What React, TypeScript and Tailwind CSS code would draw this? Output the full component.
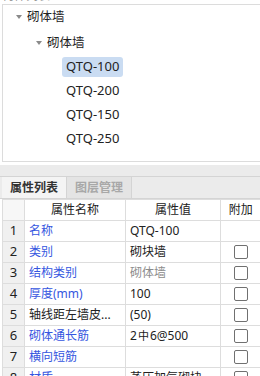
import React from "react";

const font = '"Segoe UI", "Noto Sans", "Noto Sans CJK SC", sans-serif';

type Row = { n: number; name: string; value: string; blue: boolean; grayValue?: boolean; check: boolean };

const rows: Row[] = [
  { n: 1, name: "名称", value: "QTQ-100", blue: true, check: false },
  { n: 2, name: "类别", value: "砌块墙", blue: true, check: true },
  { n: 3, name: "结构类别", value: "砌体墙", blue: true, grayValue: true, check: true },
  { n: 4, name: "厚度(mm)", value: "100", blue: true, check: true },
  { n: 5, name: "轴线距左墙皮...", value: "(50)", blue: false, check: true },
  { n: 6, name: "砌体通长筋", value: "2中6@500", blue: true, check: true },
  { n: 7, name: "横向短筋", value: "", blue: true, check: true },
  { n: 8, name: "材质", value: "蒸压加气砌块", blue: true, check: true },
];

function Caret() {
  return <span className="inline-block w-0 h-0 border-l-[3px] border-r-[3px] border-t-[4px] border-l-transparent border-r-transparent border-t-[#8a8a8a]" />;
}

export default function App() {
  return (
    <div className="w-[260px] h-[376px] overflow-hidden bg-white text-[12px] text-[#222]" style={{ fontFamily: font }}>
      {/* cut-off header label */}
      <div className="h-[4px] overflow-hidden pl-[2px]">
        <div className="-mt-[13px] text-[12px] text-[#999]">构件列表</div>
      </div>

      {/* Tree panel */}
      <div className="ml-[2px] h-[158px] border-t border-l border-b border-[#dcdcdc]">
        <div className="h-[24px] flex items-center pl-[13px] gap-[5px] text-[12.5px]">
          <Caret />
          <span>砌体墙</span>
        </div>
        <div className="h-[24px] mt-[2px] flex items-center pl-[33px] gap-[5px] text-[12.5px]">
          <Caret />
          <span>砌体墙</span>
        </div>
        {["QTQ-100", "QTQ-200", "QTQ-150", "QTQ-250"].map((t, i) => (
          <div key={t} className="h-[24px] flex items-center pl-[59px] text-[13px]">
            <span className={`h-[20px] flex items-center px-[4px] rounded-[3px] ${i === 0 ? "bg-[#cadcf2]" : ""}`}>{t}</span>
          </div>
        ))}
      </div>

      {/* Tab strip */}
      <div className="mt-[3px] h-[12px] bg-[#ebebeb] border-b border-[#d4d4d4]" />
      <div className="flex h-[22px] bg-[#ebebeb] pl-[2px] border-b border-[#d4d4d4]">
        <div className="w-[65px] flex items-center justify-center bg-[#f4f4f4] border-r border-[#d4d4d4] font-bold text-[#333]">属性列表</div>
        <div className="w-[65px] flex items-center justify-center bg-[#e4e4e4] border-r border-[#d4d4d4] font-bold text-[#a8a8a8]">图层管理</div>
      </div>

      {/* Property table */}
      <div className="pl-[2px]">
        <table className="border-collapse table-fixed w-[258px]">
          <colgroup>
            <col className="w-[22px]" />
            <col className="w-[101px]" />
            <col className="w-[95px]" />
            <col className="w-[40px]" />
          </colgroup>
          <thead>
            <tr className="h-[21px]">
              <th className="border border-[#dddddd] bg-[#f7f7f7] p-0" />
              <th className="border border-[#dddddd] font-normal text-center p-0">属性名称</th>
              <th className="border border-[#dddddd] font-normal text-center p-0">属性值</th>
              <th className="border border-[#dddddd] border-r-0 font-normal text-center p-0">附加</th>
            </tr>
          </thead>
          <tbody>
            {rows.map((r) => (
              <tr key={r.n} className="h-[21px]">
                <td className="border border-[#dddddd] bg-[#f0f0f0] text-center p-0 text-[13px]">{r.n}</td>
                <td className={`border border-[#dddddd] pl-[4px] pr-0 py-0 whitespace-nowrap overflow-hidden ${r.blue ? "text-[#3556e0]" : "text-[#222]"}`}>{r.name}</td>
                <td className={`border border-[#dddddd] pl-[4px] p-0 whitespace-nowrap overflow-hidden ${r.grayValue ? "text-[#8c8c8c]" : "text-[#222]"}`}>
                  {r.value === "2中6@500" ? (
                    <span>
                      2<span className="text-[11px] mx-[1px]">中</span>6@500
                    </span>
                  ) : (
                    r.value
                  )}
                </td>
                <td className="border border-[#dddddd] border-r-0 p-0">
                  {r.check && (
                    <div className="flex justify-center">
                      <span className="block w-[14px] h-[14px] border border-[#707070] rounded-[2px] bg-white" />
                    </div>
                  )}
                </td>
              </tr>
            ))}
          </tbody>
        </table>
      </div>
    </div>
  );
}
